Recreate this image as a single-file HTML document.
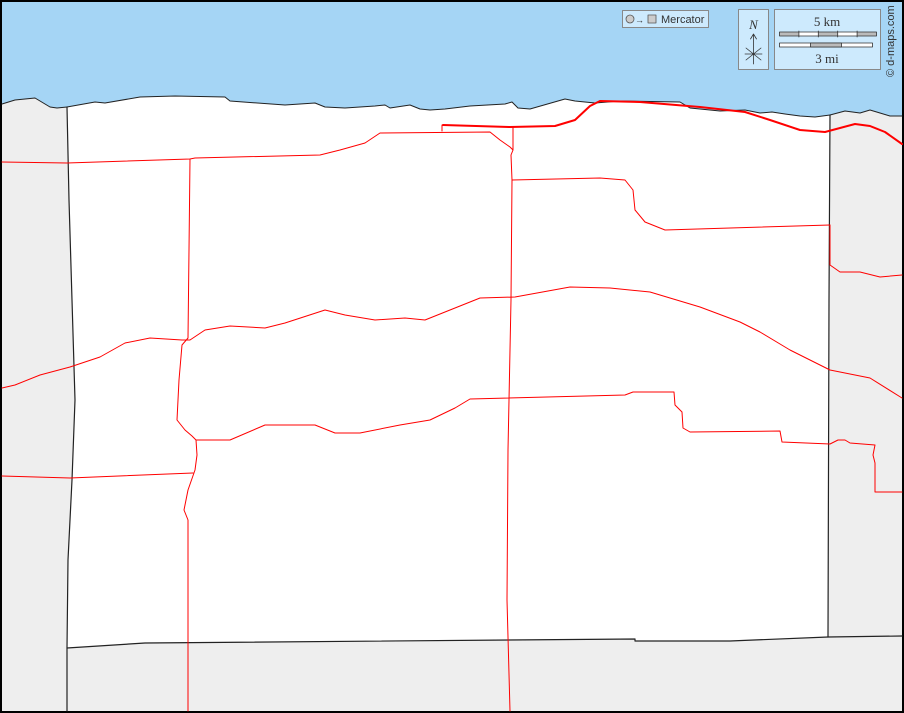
<!DOCTYPE html>
<html><head><meta charset="utf-8"><style>
html,body{margin:0;padding:0;background:#000;}
svg{display:block;}
</style></head><body>
<svg width="904" height="713" viewBox="0 0 904 713" xmlns="http://www.w3.org/2000/svg" stroke-linejoin="round" stroke-linecap="round">
<rect x="0" y="0" width="904" height="713" fill="#000"/>
<rect x="2" y="2" width="900" height="709" fill="#eeeeee"/>
<!-- water -->
<path d="M2,2 H902 V116 L890,116 880,113 870,110 860,113 845,111 830,115 815,117 800,116 785,114 772,112 760,113 745,110 720,111 690,108 680,102 620,101 595,103 575,101 565,99 530,109 518,108 512,102 505,104 470,106 445,109 430,110 420,109 410,105 390,108 385,105 375,106 345,108 325,107 315,103 285,105 230,101 225,97 175,96 140,97 105,103 95,102 67,107 57,108 50,107 35,98 15,100 2,104 Z" fill="#a5d5f5"/>
<!-- white county -->
<path d="M67,107 L95,102 105,103 140,97 175,96 225,97 230,101 285,105 315,103 325,107 345,108 375,106 385,105 390,108 410,105 420,109 430,110 445,109 470,106 505,104 512,102 518,108 530,109 565,99 575,101 595,103 620,101 680,102 690,108 720,111 745,110 760,113 772,112 785,114 800,116 815,117 830,115 L829,300 828,637 730,641 635,641 635,639 145,643 67,648 L68,560 72,480 75,400 72,300 69,200 Z" fill="#fff"/>
<!-- coastline -->
<path d="M2,104 L15,100 35,98 50,107 57,108 67,107 95,102 105,103 140,97 175,96 225,97 230,101 285,105 315,103 325,107 345,108 375,106 385,105 390,108 410,105 420,109 430,110 445,109 470,106 505,104 512,102 518,108 530,109 565,99 575,101 595,103 620,101 680,102 690,108 720,111 745,110 760,113 772,112 785,114 800,116 815,117 830,115 845,111 860,113 870,110 880,113 890,116 902,116" fill="none" stroke="#222" stroke-width="1"/>
<!-- county borders -->
<path d="M67,107 L69,200 72,300 75,400 72,480 68,560 67,648 L67,711" fill="none" stroke="#222" stroke-width="1.2"/>
<path d="M830,115 L829,300 828,637" fill="none" stroke="#222" stroke-width="1.2"/>
<path d="M67,648 L145,643 635,639 635,641 730,641 828,637 902,636" fill="none" stroke="#222" stroke-width="1.2"/>
<!-- red roads -->
<g fill="none" stroke="#f00" stroke-width="1">
<path d="M2,162 L67,163 190,159 195,158 320,155 340,150 365,143 380,133 490,132 500,140 510,147 513,150"/>
<path d="M442,125 L442,131"/>
<path d="M190,159 L189,250 188,338 182,345 179,380 177,420 185,430 192,436 196,440 197,455 195,470 188,490 184,510 188,520 188,600 188,711"/>
<path d="M513,127 L513,150 511,155 512,180 511,300 508,450 507,600 510,711"/>
<path d="M512,180 L600,178 625,180 633,190 635,210 645,222 665,230 830,225"/>
<path d="M830,225 L830,265 840,272 860,272 880,277 902,275"/>
<path d="M2,388 L15,385 40,375 70,367 100,357 125,343 150,338 182,340 190,340 205,330 230,326 265,328 285,323 325,310 345,315 375,320 405,318 425,320 445,312 480,298 515,297 570,287 610,288 650,292 700,307 740,322 760,332 790,350 830,370 845,373 870,378 902,398"/>
<path d="M196,440 L230,440 265,425 315,425 335,433 360,433 400,425 430,420 455,408 470,399 625,395 633,392 674,392 675,405 682,412 683,428 690,432 780,431 782,442 830,444 838,440 845,440 850,443 875,445 873,455 875,463 875,492 902,492"/>
<path d="M2,476 L70,478 193,473"/>
</g>
<path d="M443,125 L510,127 555,126 575,120 590,106 600,101 640,102 700,107 745,112 770,120 800,130 825,132 840,128 855,124 870,126 885,132 902,144" fill="none" stroke="#f00" stroke-width="2"/>
<!-- legend -->
<rect x="622.5" y="10.5" width="86" height="17" fill="#cdeafd" stroke="#888"/>
<circle cx="630" cy="19" r="4" fill="#ccc" stroke="#555" stroke-width="0.8"/>
<text x="635" y="23" font-family="Liberation Sans, sans-serif" font-size="9" fill="#333">→</text>
<rect x="648" y="15" width="8" height="8" fill="#ccc" stroke="#555" stroke-width="0.8"/>
<text x="661" y="23" font-family="Liberation Sans, sans-serif" font-size="11" fill="#333">Mercator</text>
<rect x="738.5" y="9.5" width="30" height="60" fill="#cdeafd" stroke="#888"/>
<text x="753.5" y="29" text-anchor="middle" font-family="Liberation Serif, serif" font-style="italic" font-size="13" fill="#333">N</text>
<path d="M753.5,64 V35 M750.5,39 L753.5,34 756.5,39 M746,48 L761,60 M761,48 L746,60 M745,54 H762" fill="none" stroke="#333" stroke-width="0.8"/>
<rect x="774.5" y="9.5" width="106" height="60" fill="#cdeafd" stroke="#888"/>
<text x="827" y="26" text-anchor="middle" font-family="Liberation Serif, serif" font-size="13" fill="#333">5 km</text>
<rect x="779.5" y="32" width="97" height="4" fill="#fff"/>
<rect x="779.5" y="32" width="19.4" height="4" fill="#bbb"/>
<rect x="818.3" y="32" width="19.4" height="4" fill="#bbb"/>
<rect x="857.1" y="32" width="19.4" height="4" fill="#bbb"/>
<rect x="779.5" y="32" width="97" height="4" fill="none" stroke="#333" stroke-width="0.8"/>
<path d="M798.9,31 V37 M818.3,31 V37 M837.7,31 V37 M857.1,31 V37" stroke="#333" stroke-width="0.8"/>
<rect x="779.5" y="43" width="93" height="4" fill="#fff" stroke="#333" stroke-width="0.8"/>
<rect x="810.5" y="43" width="31" height="4" fill="#bbb" stroke="#333" stroke-width="0.8"/>
<text x="827" y="63" text-anchor="middle" font-family="Liberation Serif, serif" font-size="13" fill="#333">3 mi</text>
<text transform="translate(894,77) rotate(-90)" font-family="Liberation Sans, sans-serif" font-size="11" fill="#333">© d-maps.com</text>
</svg>
</body></html>
